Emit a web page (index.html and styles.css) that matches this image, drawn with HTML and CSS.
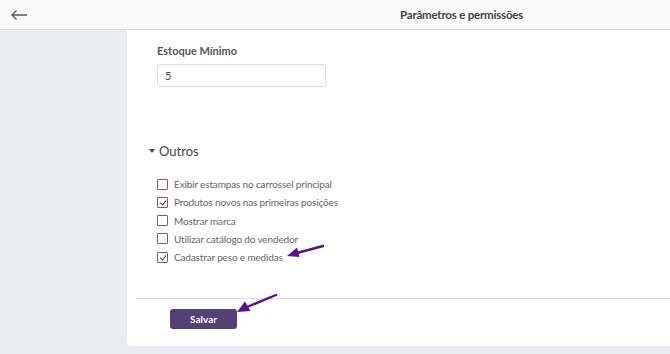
FILE: index.html
```html
<!DOCTYPE html>
<html lang="pt">
<head>
  <meta charset="UTF-8" />
  <title>Parâmetros e permissões</title>
  <link rel="stylesheet" href="styles.css">
</head>
<body>
<header class="topbar">
  <div class="back-icon">
    <svg width="18" height="12" viewBox="0 0 18 12"><path d="M17 6H2M6.5 1.5L2 6l4.5 4.5" fill="none" stroke="#555" stroke-width="1.3"/></svg>
  </div>
  <div class="page-title">Parâmetros e permissões</div>
</header>

<div class="layout">
  <aside class="side"></aside>

  <main class="card">
    <div class="field">
      <label class="field-label">Estoque Mínimo</label>
      <input class="field-input" type="text" value="5">
    </div>

    <div class="section">
      <div class="section-title"><span class="caret"></span>Outros</div>
      <ul class="options">
        <li class="option"><span class="box"></span>Exibir estampas no carrossel principal</li>
        <li class="option"><span class="box checked"></span>Produtos novos nas primeiras posições</li>
        <li class="option"><span class="box"></span>Mostrar marca</li>
        <li class="option"><span class="box"></span>Utilizar catálogo do vendedor</li>
        <li class="option"><span class="box checked"></span><span class="option-text">Cadastrar peso e medidas
          <svg class="note-arrow arrow-one" width="40" height="16" viewBox="0 0 40 16"><path d="M37 2L9 9.5" stroke="#5a1189" stroke-width="2.4" stroke-linecap="round"/><path d="M1 12L11 3.5L13.5 13Z" fill="#5a1189"/></svg></span>
        </li>
      </ul>
    </div>

    <div class="footer">
      <button class="save-btn">Salvar
        <svg class="note-arrow arrow-two" width="44" height="22" viewBox="0 0 44 22"><path d="M41 2L12 14" stroke="#5a1189" stroke-width="2.4" stroke-linecap="round"/><path d="M2 19L10 8.5L15.5 18Z" fill="#5a1189"/></svg>
      </button>
    </div>
  </main>
</div>
</body>
</html>
```

FILE: styles.css
```css
* {
  margin: 0;
  padding: 0;
  box-sizing: border-box;
}

body {
  font-family: 'Lato', 'Noto Sans', sans-serif;
  background-color: #e9edf1;
  color: #555;
  width: 670px;
  height: 354px;
  overflow: hidden;
}

.topbar {
  display: flex;
  align-items: center;
  height: 30px;
  background-color: #f9f9f9;
  border-bottom: 1px solid #dcdcdc;
}

.back-icon {
  width: 60px;
  padding-left: 10px;
  display: flex;
  align-items: center;
}

.page-title {
  margin-left: 340px;
  font-size: 11.5px;
  font-weight: 700;
  letter-spacing: -0.2px;
  color: #444;
}

.layout {
  display: flex;
}

.side {
  width: 127px;
  flex-shrink: 0;
}

.card {
  flex: 1;
  height: 316px;
  background-color: #fff;
  border-radius: 0 0 0 4px;
  padding: 14px 0 0 9px;
}

.field {
  padding-left: 21px;
}

.field-label {
  display: block;
  font-size: 11px;
  font-weight: 700;
  color: #555;
  margin-bottom: 7px;
}

.field-input {
  width: 169px;
  height: 23px;
  border: 1px solid #dedede;
  border-radius: 3px;
  padding: 0 7px;
  font-family: inherit;
  font-size: 11px;
  color: #444;
}

.section {
  margin-top: 56px;
  padding-left: 13px;
}

.section-title {
  display: flex;
  align-items: center;
  font-size: 13px;
  color: #444;
}

.caret {
  width: 0;
  height: 0;
  border-left: 3.5px solid transparent;
  border-right: 3.5px solid transparent;
  border-top: 4px solid #444;
  margin-right: 4px;
}

.options {
  list-style: none;
  margin-top: 16px;
  padding-left: 8px;
}

.option {
  display: flex;
  align-items: center;
  height: 18.25px;
  font-size: 10px;
  letter-spacing: -0.15px;
  color: #666;
}

.option-text {
  position: relative;
}

.box {
  width: 11px;
  height: 11px;
  border: 1px solid #6e5d85;
  border-radius: 1px;
  margin-right: 6px;
  position: relative;
}

.box.checked::after {
  content: "";
  position: absolute;
  left: 3px;
  top: 1px;
  width: 3px;
  height: 5px;
  border-right: 1.5px solid #4a3a66;
  border-bottom: 1.5px solid #4a3a66;
  transform: rotate(40deg);
}

.note-arrow {
  position: absolute;
}

.arrow-one {
  left: calc(100% + 3px);
  top: -7px;
}

.footer {
  margin-top: 32px;
  border-top: 1px solid #dcdcdc;
  padding: 10px 0 0 34px;
}

.save-btn {
  display: block;
  position: relative;
  width: 67px;
  height: 20px;
  background-color: #553f77;
  color: #fff;
  border: none;
  border-radius: 3px;
  font-family: inherit;
  font-size: 10px;
  font-weight: 700;
}

.arrow-two {
  left: 65px;
  top: -16px;
}
```
